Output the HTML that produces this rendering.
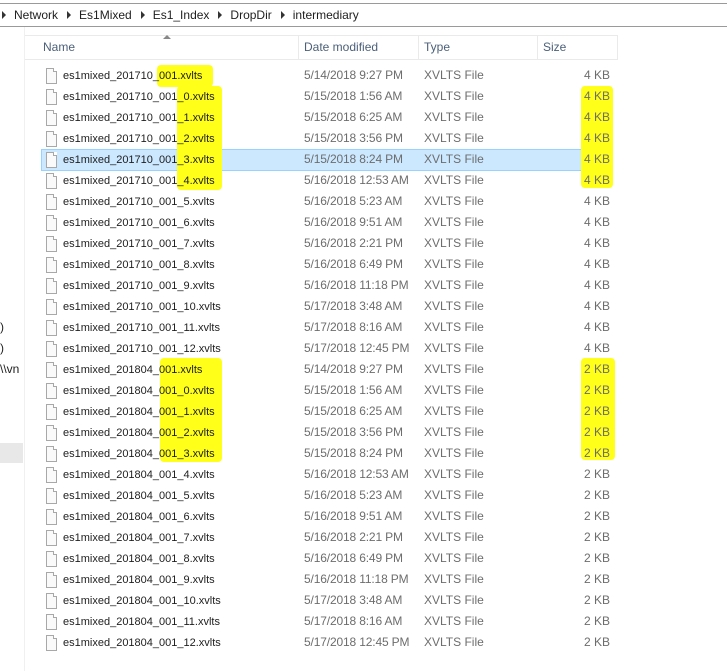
<!DOCTYPE html>
<html><head><style>
body{margin:0;width:727px;height:671px;background:#fff;font-family:"Liberation Sans",sans-serif;font-size:12px;color:#1e1e1e;position:relative;overflow:hidden}
.a{position:absolute;white-space:nowrap}
.hl{position:absolute;background:#ffff1a;border-radius:4px}
.r{position:absolute;left:0;width:727px;height:21px;line-height:21px}
.ic{position:absolute;left:46px;top:3px;width:9px;height:14px;border:1px solid #a8a8a8;background:#fafafa}
.ic:after{content:"";position:absolute;right:-1px;top:-1px;width:3px;height:3px;background:#fff;border-left:1px solid #a8a8a8;border-bottom:1px solid #a8a8a8}
.n{position:absolute;left:63px;font-size:11px;top:1px}.d{position:absolute;left:304px;color:#6d6d6d;letter-spacing:-0.15px}.t{position:absolute;left:424px;color:#6d6d6d}.s{position:absolute;right:117px;color:#6d6d6d}
.tri{display:inline-block;width:0;height:0;border-left:4px solid #333;border-top:4px solid transparent;border-bottom:4px solid transparent;margin:0 8px 0 9px}
</style></head><body>
<div class="a" style="left:0;top:3px;width:727px;height:22px;border-top:1px solid #9a9a9a;border-bottom:1px solid #9a9a9a"></div>
<div class="a" style="left:-7px;top:8px;font-size:12px"><span class="tri"></span>Network<span class="tri"></span>Es1Mixed<span class="tri"></span>Es1_Index<span class="tri"></span>DropDir<span class="tri"></span>intermediary</div>
<div class="a" style="left:24px;top:27px;width:1px;height:644px;background:#f0f0f0"></div>
<div class="a" style="left:0;top:443px;width:23px;height:20px;background:#e8e8e8"></div>
<div class="a" style="left:0;top:320px">)</div>
<div class="a" style="left:0;top:341px">)</div>
<div class="a" style="left:0;top:362px">\\vn</div>
<div class="a" style="left:25px;top:35px;width:592px;height:23px;border-top:1px solid #eaeaea;border-bottom:1px solid #eaeaea;border-right:1px solid #eaeaea"></div>
<div class="a" style="left:298px;top:35px;width:1px;height:24px;background:#eaeaea"></div>
<div class="a" style="left:418px;top:35px;width:1px;height:24px;background:#eaeaea"></div>
<div class="a" style="left:537px;top:35px;width:1px;height:24px;background:#eaeaea"></div>
<div class="a" style="left:163px;top:35px;width:0;height:0;border-left:4px solid transparent;border-right:4px solid transparent;border-bottom:4px solid #888"></div>
<div class="a" style="left:43px;top:40px;color:#4c607a">Name</div>
<div class="a" style="left:304px;top:40px;color:#4c607a">Date modified</div>
<div class="a" style="left:424px;top:40px;color:#4c607a">Type</div>
<div class="a" style="left:543px;top:40px;color:#4c607a">Size</div>
<div class="a" style="left:41px;top:149px;width:570px;height:20px;background:#cce8ff;border:1px solid #99d1ff"></div>
<div class="hl" style="left:157px;top:65px;width:56px;height:22px"></div>
<div class="hl" style="left:177px;top:86px;width:45px;height:104px"></div>
<div class="hl" style="left:581px;top:86px;width:32px;height:102px"></div>
<div class="hl" style="left:160px;top:358px;width:62px;height:104px"></div>
<div class="hl" style="left:581px;top:358px;width:34px;height:102px"></div>
<div id="rows"></div>
<script>
var d1=["5/14/2018 9:27 PM","5/15/2018 1:56 AM","5/15/2018 6:25 AM","5/15/2018 3:56 PM","5/15/2018 8:24 PM","5/16/2018 12:53 AM","5/16/2018 5:23 AM","5/16/2018 9:51 AM","5/16/2018 2:21 PM","5/16/2018 6:49 PM","5/16/2018 11:18 PM","5/17/2018 3:48 AM","5/17/2018 8:16 AM","5/17/2018 12:45 PM"];
var h="";
for(var i=0;i<28;i++){var g=i<14?"201710":"201804",k=i%14;var nm="es1mixed_"+g+"_001"+(k?"_"+(k-1):"")+".xvlts";
h+='<div class="r" style="top:'+(65+21*i)+'px"><div class="ic"></div><span class="n">'+nm+'</span><span class="d">'+d1[k]+'</span><span class="t">XVLTS File</span><span class="s">'+(i<14?4:2)+' KB</span></div>';}
document.getElementById("rows").innerHTML=h;
</script>
</body></html>
